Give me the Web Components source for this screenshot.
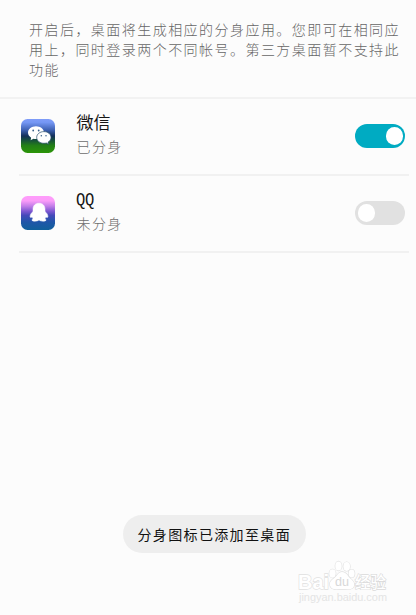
<!DOCTYPE html>
<html lang="zh-CN">
<head>
<meta charset="utf-8">
<title>应用分身</title>
<style>
html,body{margin:0;height:100%;background:#fcfcfc}
body{font-family:"Liberation Sans","Noto Sans CJK SC",sans-serif;overflow:hidden}
</style>
</head>
<body>
<clone-page></clone-page>
<script>
const define = (name, html) => customElements.define(name, class extends HTMLElement {
  constructor() {
    super();
    this.attachShadow({mode: 'open'}).innerHTML = html;
  }
});

define('page-note', `<style>
:host{display:block;box-sizing:border-box;height:99px;padding:18.5px 0 0 29px;border-bottom:2px solid #f2f2f2;
font:300 14px/20.3px "Noto Sans CJK SC",sans-serif;letter-spacing:1.46px;color:#666;white-space:nowrap}
</style><slot></slot>`);

define('toggle-switch', `<style>
:host{display:flex;box-sizing:border-box;width:50px;height:24px;border-radius:12px;padding:3px 2.5px;background:#e1e1e1}
:host([on]){background:#00abc2;justify-content:flex-end;padding-right:2px}
i{width:17.5px;height:17.5px;border-radius:50%;background:#fff}
</style><i></i>`);

define('app-row', `<style>
:host{display:flex;box-sizing:border-box;height:77px;margin:0 7px 0 19px;padding:0 4px 0 2px;border-bottom:2px solid #f1f1f1}
.icon{width:34px;height:34px;margin-top:20.4px}
.text{flex:1;padding:11px 0 0 21.5px}
.name{height:24px;font:400 17px/24px "Noto Sans CJK SC",sans-serif;color:#161616}
.state{height:24px;font:300 14px/24px "Noto Sans CJK SC",sans-serif;letter-spacing:1.4px;color:#6c6c6c}
.switch{margin-top:25px}
</style><div class="icon"><slot name="icon"></slot></div>
<div class="text"><div class="name"><slot name="name"></slot></div><div class="state"><slot name="state"></slot></div></div>
<div class="switch"><slot name="switch"></slot></div>`);

define('wechat-icon', `<style>:host,svg{display:block;width:34px;height:34px}</style>
<svg viewBox="0 0 34 34"><defs><linearGradient id="g" x2="0" y2="1">
<stop offset="0" stop-color="#7f9cf8"/><stop offset=".1" stop-color="#7597f4"/><stop offset=".32" stop-color="#3f62b4"/><stop offset=".5" stop-color="#122f59"/><stop offset=".62" stop-color="#174f3c"/><stop offset=".78" stop-color="#237f17"/><stop offset="1" stop-color="#2c9608"/></linearGradient></defs>
<rect width="34" height="34" rx="6.5" fill="url(#g)"/>
<path d="M15 7.3c-4.4 0-8 2.8-8 6.3 0 2.1 1.2 3.9 3.1 5.1l-.5 2.6 2.9-1.6c4.5 1.2 10.5-1.3 10.5-6.1 0-3.5-3.6-6.3-8-6.3z" fill="#fff"/>
<path d="M22.9 12.6c-4.1 0-7.2 2.6-7.2 5.8s3.1 5.9 7.2 5.9c.9 0 1.8-.1 2.5-.3l2 1.3-.3-2.2c1.8-1 2.9-2.8 2.9-4.7 0-3.2-3-5.8-7.1-5.8z" fill="#fff" stroke="#244b69" stroke-width=".7"/>
<g fill="#3a6088"><circle cx="12.2" cy="11.5" r=".9"/><circle cx="17.7" cy="11.5" r=".9"/><circle cx="20.3" cy="16.7" r=".75"/><circle cx="25" cy="16.7" r=".75"/></g></svg>`);

define('qq-icon', `<style>:host,svg{display:block;width:34px;height:34px}</style>
<svg viewBox="0 0 34 34"><defs><linearGradient id="g" x2="0" y2="1">
<stop offset="0" stop-color="#ff9cfb"/><stop offset=".14" stop-color="#fb9cf9"/><stop offset=".3" stop-color="#c17de8"/><stop offset=".46" stop-color="#7855cf"/><stop offset=".57" stop-color="#4549b9"/><stop offset=".76" stop-color="#2056a9"/><stop offset="1" stop-color="#11609b"/></linearGradient></defs>
<rect width="34" height="34" rx="6.5" fill="url(#g)"/>
<path d="M18 7.2c-3.800 0-6 2.600-6 6v2.200c-1.700 1.400-3 3.400-2.900 5.300.1 1 1 1 2.100.3.200.8.500 1.400.9 1.900-.8.400-1.300.8-1.200 1.300.3 1.300 5.500 1.300 6.500.100h1.200c1 1.200 6.200 1.200 6.500-.1.100-.5-.4-.9-1.200-1.300.4-.5.7-1.100.9-1.900 1.100.7 2 .7 2.100-.3.100-1.900-1.200-3.900-2.900-5.300v-2.200c0-3.400-2.200-6-6-6z" fill="#fff" stroke="#fff" stroke-width=".5"/></svg>`);

define('toast-pill', `<style>
:host{position:absolute;left:122.5px;top:514.5px;width:183px;height:38px;border-radius:19px;background:#eee;display:flex;align-items:center;box-sizing:border-box;padding:1px 0 0 15px;
font:400 14px/20px "Noto Sans CJK SC",sans-serif;letter-spacing:1.35px;color:#111;white-space:nowrap}
</style><slot></slot>`);

define('site-mark', `<style>
:host{position:absolute;left:298px;top:560px;width:92px;height:44px}
svg{display:block;width:92px;height:44px}
text{font-family:"Liberation Sans","Noto Sans CJK SC",sans-serif}
</style><svg viewBox="0 0 92 44"><g fill="#fff" stroke="#e0e0e0" stroke-width="1.3" paint-order="stroke">
<text x="0" y="29" font-size="21" font-weight="700" textLength="31" lengthAdjust="spacingAndGlyphs">Bai</text>
<ellipse cx="34.5" cy="13.5" rx="3.2" ry="4.2"/><ellipse cx="40.5" cy="6" rx="3.2" ry="4.6"/><ellipse cx="48.7" cy="6.5" rx="3.3" ry="4.4"/><ellipse cx="53.6" cy="13.5" rx="3" ry="3.9"/>
<path d="M44 12c-4 0-5.2 4.6-8.3 6.6-2.8 1.9-4.7 4.5-3.4 7.6 1.7 3.9 6 2.8 11.7 2.800s10.2 1 11.8-2.600c1.500-3.400-.8-5.700-3.500-8C49.500 16 48.500 12 44 12z"/>
<text x="57" y="28" font-size="16" font-weight="500" stroke="#dadada" textLength="31" lengthAdjust="spacingAndGlyphs">经验</text></g>
<text x="37" y="26" font-size="12" fill="#d8d8d8" textLength="14" lengthAdjust="spacingAndGlyphs">du</text>
<text x="1" y="41" font-size="10.5" fill="#e4e4e4" textLength="88" lengthAdjust="spacingAndGlyphs">jingyan.baidu.com</text></svg>`);

define('clone-page', `<style>
:host{display:block;position:relative;width:416px;height:615px;background:#fcfcfc;overflow:hidden}
.latin{display:inline-block;font-family:"Liberation Mono",monospace;font-size:15.5px;line-height:20px;transform:translateY(-2px) scaleY(1.2);letter-spacing:-.2px;margin-left:-.5px}
</style>
<page-note>开启后，桌面将生成相应的分身应用。您即可在相同应<br>用上，同时登录两个不同帐号。第三方桌面暂不支持此<br>功能</page-note>
<app-row><wechat-icon slot="icon"></wechat-icon><span slot="name">微信</span><span slot="state">已分身</span><toggle-switch slot="switch" on></toggle-switch></app-row>
<app-row><qq-icon slot="icon"></qq-icon><span slot="name" class="latin">QQ</span><span slot="state">未分身</span><toggle-switch slot="switch"></toggle-switch></app-row>
<toast-pill>分身图标已添加至桌面</toast-pill>
<site-mark></site-mark>`);
</script>
</body>
</html>
